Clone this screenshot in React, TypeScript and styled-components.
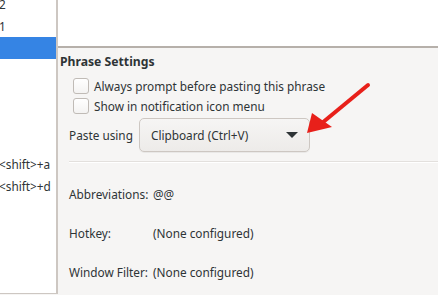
import React from "react";
import styled, { createGlobalStyle } from "styled-components";

const GlobalStyle = createGlobalStyle`
	html, body {
		margin: 0;
		padding: 0;
		background: #f6f5f4;
		overflow: hidden;
	}
	body {
		font-family: "Noto Sans", "Open Sans", sans-serif;
		font-size: 11.8px;
		color: #2e3436;
	}
`;

const Window = styled.div`
	position: relative;
	display: flex;
	width: 438px;
	height: 295px;
	overflow: hidden;
	background: #f6f5f4;
`;

const Sidebar = styled.div`
	width: 58px;
	height: 294px;
	flex-shrink: 0;
	background: #ffffff;
	border-right: 2px solid #cdc7c2;
	border-bottom: 1px solid #cdc7c2;
	overflow: hidden;
	box-sizing: border-box;
`;

const Row = styled.div<{ $selected?: boolean; $gap?: number }>`
	height: 22px;
	line-height: 22px;
	white-space: nowrap;
	overflow: hidden;
	background: ${(p) => (p.$selected ? "#3584e4" : "transparent")};
	color: ${(p) => (p.$selected ? "#ffffff" : "#2e3436")};
	margin-top: ${(p) => p.$gap ?? 0}px;
	margin-left: -1px;
`;

const FirstRow = styled(Row)`
	height: 15px;
	line-height: 9px;
`;

const Main = styled.div`
	flex: 1;
	display: flex;
	flex-direction: column;
	min-width: 0;
`;

const Preview = styled.div`
	height: 46px;
	background: #ffffff;
	border-bottom: 2px solid #b6b0aa;
	flex-shrink: 0;
`;

const Settings = styled.div`
	display: flex;
	flex-direction: column;
	padding: 5px 0 0 2px;
`;

const Title = styled.div`
	font-weight: bold;
	font-size: 12.2px;
	line-height: 18px;
`;

const CheckRow = styled.label<{ $first?: boolean }>`
	display: flex;
	align-items: center;
	gap: 5px;
	height: 20px;
	margin: ${(p) => (p.$first ? 5 : 0)}px 0 0 13px;
`;

const CheckBox = styled.span`
	width: 14px;
	height: 14px;
	border: 1px solid #c0bbb6;
	border-radius: 3px;
	background: linear-gradient(#ffffff, #f4f3f2);
	flex-shrink: 0;
`;

const PasteRow = styled.div`
	display: flex;
	align-items: center;
	gap: 6px;
	margin: 2px 0 0 9px;
`;

const Combo = styled.div`
	display: flex;
	align-items: center;
	justify-content: space-between;
	width: 171px;
	height: 34px;
	box-sizing: border-box;
	padding: 0 11px 0 11px;
	border: 1px solid #cdc7c2;
	border-radius: 5px;
	background: linear-gradient(#f6f5f4, #edebe9);
	box-shadow: 0 1px 0 rgba(0, 0, 0, 0.05);
`;

const Caret = styled.span`
	width: 0;
	height: 0;
	border-left: 6px solid transparent;
	border-right: 6px solid transparent;
	border-top: 6px solid #2e3436;
`;

const Divider = styled.div`
	height: 1px;
	margin: 9px 0 0 9px;
	background: #e3e0dd;
	border-bottom: 1px solid #ffffff;
`;

const Fields = styled.div`
	display: grid;
	grid-template-columns: 84px auto;
	row-gap: 21px;
	margin: 22px 0 0 9px;
	line-height: 18px;
`;

const Arrow = styled.svg`
	position: absolute;
	left: 300px;
	top: 78px;
	pointer-events: none;
`;

export default function App() {
	return (
		<>
			<GlobalStyle />
			<Window>
				<Sidebar>
					<FirstRow>2</FirstRow>
					<Row>1</Row>
					<Row $selected />
					<Row $gap={94}>&lt;shift&gt;+a</Row>
					<Row>&lt;shift&gt;+d</Row>
				</Sidebar>
				<Main>
					<Preview />
					<Settings>
						<Title>Phrase Settings</Title>
						<CheckRow $first>
							<CheckBox />
							Always prompt before pasting this phrase
						</CheckRow>
						<CheckRow>
							<CheckBox />
							Show in notification icon menu
						</CheckRow>
						<PasteRow>
							Paste using
							<Combo>
								Clipboard (Ctrl+V)
								<Caret />
							</Combo>
						</PasteRow>
						<Divider />
						<Fields>
							<span>Abbreviations:</span>
							<span>@@</span>
							<span>Hotkey:</span>
							<span>(None configured)</span>
							<span>Window Filter:</span>
							<span>(None configured)</span>
						</Fields>
					</Settings>
				</Main>
				<Arrow width="80" height="70" viewBox="0 0 80 70">
					<line x1="68" y1="7" x2="22" y2="45" stroke="#e8201a" strokeWidth="4" strokeLinecap="round" />
					<polygon points="7,55 12,35 32,49" fill="#e8201a" />
				</Arrow>
			</Window>
		</>
	);
}
